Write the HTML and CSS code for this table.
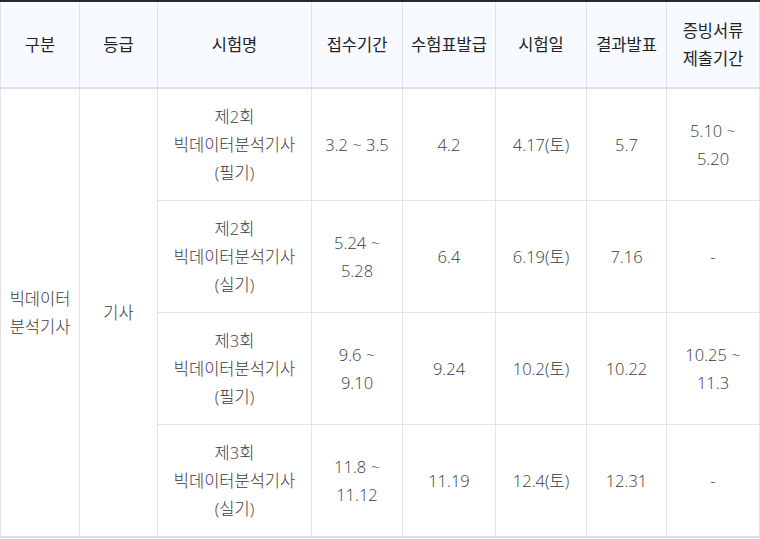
FILE: index.html
```html
<!DOCTYPE html>
<html lang="ko">
<head>
<meta charset="utf-8">
<link rel="stylesheet" href="styles.css">
</head>
<body>
<table class="schedule">
  <colgroup>
    <col class="c1"><col class="c2"><col class="c3"><col class="c4"><col class="c5"><col class="c6"><col class="c7"><col class="c8">
  </colgroup>
  <thead>
    <tr>
      <th>구분</th>
      <th>등급</th>
      <th>시험명</th>
      <th>접수기간</th>
      <th>수험표발급</th>
      <th>시험일</th>
      <th>결과발표</th>
      <th>증빙서류<br>제출기간</th>
    </tr>
  </thead>
  <tbody>
    <tr>
      <td rowspan="4">빅데이터<br>분석기사</td>
      <td rowspan="4">기사</td>
      <td>제2회<br>빅데이터분석기사<br>(필기)</td>
      <td>3.2 ~ 3.5</td>
      <td>4.2</td>
      <td>4.17(토)</td>
      <td>5.7</td>
      <td>5.10 ~<br>5.20</td>
    </tr>
    <tr>
      <td>제2회<br>빅데이터분석기사<br>(실기)</td>
      <td>5.24 ~<br>5.28</td>
      <td>6.4</td>
      <td>6.19(토)</td>
      <td>7.16</td>
      <td>-</td>
    </tr>
    <tr>
      <td>제3회<br>빅데이터분석기사<br>(필기)</td>
      <td>9.6 ~<br>9.10</td>
      <td>9.24</td>
      <td>10.2(토)</td>
      <td>10.22</td>
      <td>10.25 ~<br>11.3</td>
    </tr>
    <tr>
      <td>제3회<br>빅데이터분석기사<br>(실기)</td>
      <td>11.8 ~<br>11.12</td>
      <td>11.19</td>
      <td>12.4(토)</td>
      <td>12.31</td>
      <td>-</td>
    </tr>
  </tbody>
</table>
</body>
</html>
```

FILE: styles.css
```css
html, body {
  margin: 0;
  padding: 0;
  background: #ffffff;
}

.schedule {
  border-collapse: collapse;
  table-layout: fixed;
  width: 759px;
  font-family: "Open Sans", "Noto Sans CJK KR", sans-serif;
  font-size: 16.5px;
  line-height: 28px;
  color: #4a4a4a;
  border-top: 2px solid #2b2b2b;
  border-bottom: 2px solid #dde1e6;
}

.c1 { width: 79px; }
.c2 { width: 78px; }
.c3 { width: 154px; }
.c4 { width: 91px; }
.c5 { width: 93px; }
.c6 { width: 91px; }
.c7 { width: 80px; }
.c8 { width: 93px; }

.schedule th,
.schedule td {
  border: 1px solid #e3e3e3;
  padding: 0;
  text-align: center;
  vertical-align: middle;
}

.schedule th {
  height: 85px;
  background: #f7faff;
  color: #222222;
  font-weight: normal;
  border-bottom: 2px solid #dde1e6;
  border-top: none;
}

.schedule tbody td {
  height: 111px;
  font-weight: 300;
  color: #3a3a3a;
}

.schedule tbody tr:last-child td {
  border-bottom: none;
}
```
